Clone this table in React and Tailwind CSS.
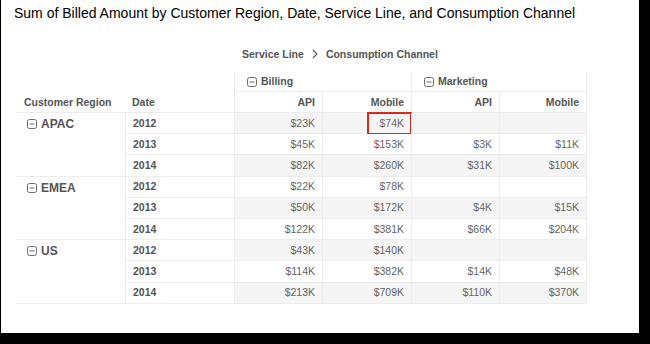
import React from "react";

const MinusBox = ({ size = 10 }) => (
  <svg width={size} height={size} viewBox="0 0 10 10" className="shrink-0">
    <rect x="0.5" y="0.5" width="9" height="9" rx="2" fill="none" stroke="#6b6b6b" strokeWidth="1" />
    <line x1="2.5" y1="5" x2="7.5" y2="5" stroke="#6b6b6b" strokeWidth="1" />
  </svg>
);

const data = [
  { region: "APAC", rows: [["2012", "$23K", "$74K", "", ""], ["2013", "$45K", "$153K", "$3K", "$11K"], ["2014", "$82K", "$260K", "$31K", "$100K"]] },
  { region: "EMEA", rows: [["2012", "$22K", "$78K", "", ""], ["2013", "$50K", "$172K", "$4K", "$15K"], ["2014", "$122K", "$381K", "$66K", "$204K"]] },
  { region: "US", rows: [["2012", "$43K", "$140K", "", ""], ["2013", "$114K", "$382K", "$14K", "$48K"], ["2014", "$213K", "$709K", "$110K", "$370K"]] },
];

export default function App() {
  let idx = 0;
  return (
    <div className="w-[650px] h-[344px] bg-black overflow-hidden" style={{ fontFamily: '"Liberation Sans", Arial, sans-serif' }}>
      <div className="ml-[1px] w-[638px] h-[333px] bg-white flex flex-col">
        <div className="pl-[13px] pt-[5px] h-[24px] text-[14px] leading-[17px] text-black">
          Sum of Billed Amount by Customer Region, Date, Service Line, and Consumption Channel
        </div>
        <div className="h-[48px] pl-[241px] pt-[24px] flex items-start gap-[8px] text-[10.5px] leading-[12px] font-bold text-[#555]">
          <span>Service Line</span>
          <svg width="6" height="10" viewBox="0 0 6 10" className="mt-[1px]">
            <polyline points="1,1 5,5 1,9" fill="none" stroke="#555" strokeWidth="1.1" />
          </svg>
          <span>Consumption Channel</span>
        </div>
        <div className="ml-[15px] w-[571px] grid grid-cols-[109px_109px_88px_89px_88px_88px]">
          {/* header row 1 */}
          <div className="col-span-2 h-[20px]" />
          <div className="col-span-2 h-[20px] border-l border-b border-[#ededed] flex items-center gap-[4px] pl-[12px] pt-[1px] text-[10.5px] font-bold text-[#555]">
            <MinusBox />
            <span>Billing</span>
          </div>
          <div className="col-span-2 h-[20px] border-l border-r border-b border-[#ededed] flex items-center gap-[4px] pl-[12px] pt-[1px] text-[10.5px] font-bold text-[#555]">
            <MinusBox />
            <span>Marketing</span>
          </div>
          {/* header row 2 */}
          <div className="h-[21px] border-b border-[#ededed] flex items-center pl-[8px] pt-[1px] text-[10.5px] font-bold text-[#555]">Customer Region</div>
          <div className="h-[21px] border-b border-[#ededed] flex items-center pl-[7px] pt-[1px] text-[10.5px] font-bold text-[#555]">Date</div>
          {["API", "Mobile", "API", "Mobile"].map((h, i) => (
            <div key={i} className={`h-[21px] border-b border-l border-[#ededed] flex items-center justify-end pr-[7px] pt-[1px] text-[10.5px] font-bold text-[#555] ${i === 3 ? "border-r" : ""}`}>
              {h}
            </div>
          ))}
          {/* data */}
          {data.map((g) => (
            <React.Fragment key={g.region}>
              <div className="row-span-3 border-b border-[#ededed] flex items-start gap-[4px] pl-[11px] pt-[6px] text-[12px] leading-[12px] font-bold text-[#555]">
                <MinusBox />
                <span className="mt-[-1px]">{g.region}</span>
              </div>
              {g.rows.map((r) => {
                const stripe = idx % 2 === 0;
                const first = idx === 0;
                idx++;
                return (
                  <React.Fragment key={r[0]}>
                    <div className="h-[21.2px] border-l border-b border-[#ededed] flex items-center pl-[7px] pt-[1px] text-[10.5px] font-bold text-[#555]">{r[0]}</div>
                    {r.slice(1).map((v, j) => (
                      <div
                        key={j}
                        className={`relative h-[21.2px] border-l border-b border-[#ededed] flex items-center justify-end pr-[7px] pt-[1px] text-[10.5px] text-[#666] ${stripe ? "bg-[#f5f5f5]" : "bg-white"} ${j === 3 ? "border-r" : ""}`}
                      >
                        {v}
                        {first && j === 1 && (
                          <div className="absolute top-[-1px] left-[44px] right-[-1px] h-[23px] border-2 border-[#e3241b]" />
                        )}
                      </div>
                    ))}
                  </React.Fragment>
                );
              })}
            </React.Fragment>
          ))}
        </div>
      </div>
    </div>
  );
}
